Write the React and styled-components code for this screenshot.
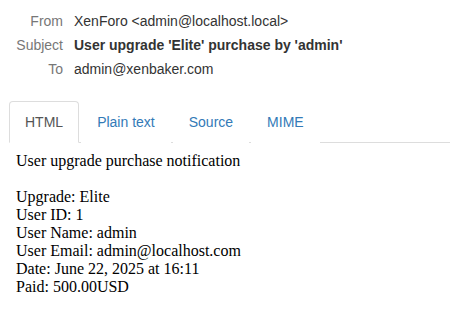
import React from 'react';
import styled, { createGlobalStyle } from 'styled-components';

const Global = createGlobalStyle`
    html, body {
        margin: 0;
        padding: 0;
        background: #fff;
    }
`

const Page = styled.div`
    width: 450px;
    font-family: "Liberation Sans", Arial, sans-serif;
    font-size: 14px;
    color: #333;
`

const Headers = styled.dl`
    display: grid;
    grid-template-columns: 63px auto;
    column-gap: 11px;
    row-gap: 4px;
    margin: 0;
    padding: 11px 0 0 0;
    line-height: 20px;
`

const Label = styled.dt`
    text-align: right;
    color: #777;
`

const Value = styled.dd`
    margin: 0;
    color: #333;
    font-weight: ${p => (p.$bold ? 'bold' : 'normal')};
`

const Tabs = styled.ul`
    display: flex;
    list-style: none;
    margin: 22px 0 0 9px;
    padding: 0;
    border-bottom: 1px solid #ddd;
`

const Tab = styled.li`
    margin-right: 2px;
    margin-bottom: -1px;
    padding: 10px 15px;
    line-height: 20px;
    border: 1px solid ${p => (p.$active ? '#ddd' : 'transparent')};
    border-bottom-color: ${p => (p.$active ? '#fff' : 'transparent')};
    border-radius: 4px 4px 0 0;
    background: #fff;
    color: ${p => (p.$active ? '#555' : '#337ab7')};
    cursor: ${p => (p.$active ? 'default' : 'pointer')};
`

const Body = styled.div`
    padding: 9px 16px 0 16px;
    font-family: "Liberation Serif", "Times New Roman", serif;
    font-size: 16px;
    color: #000;
`

const Line = styled.div`
    min-height: ${p => (p.$blank ? '1.107em' : '0')};
`

const headers = [
    { label: 'From', value: 'XenForo <admin@localhost.local>' },
    { label: 'Subject', value: "User upgrade 'Elite' purchase by 'admin'", bold: true },
    { label: 'To', value: 'admin@xenbaker.com' },
]

const tabs = ['HTML', 'Plain text', 'Source', 'MIME']

const lines = [
    'User upgrade purchase notification',
    '',
    'Upgrade: Elite',
    'User ID: 1',
    'User Name: admin',
    'User Email: admin@localhost.com',
    'Date: June 22, 2025 at 16:11',
    'Paid: 500.00USD',
]

const App = () => {
    return (
        <Page>
            <Global/>
            <Headers>
                {headers.map(h => (
                    <React.Fragment key={h.label}>
                        <Label>{h.label}</Label>
                        <Value $bold={h.bold}>{h.value}</Value>
                    </React.Fragment>
                ))}
            </Headers>

            <Tabs>
                {tabs.map((t, i) => (
                    <Tab key={t} $active={i === 0}>{t}</Tab>
                ))}
            </Tabs>

            <Body>
                {lines.map((l, i) => (
                    <Line key={i} $blank={!l}>{l}</Line>
                ))}
            </Body>
        </Page>
    );
}

export default App;
